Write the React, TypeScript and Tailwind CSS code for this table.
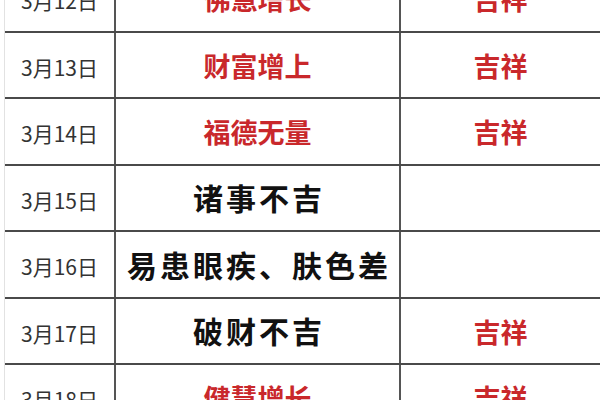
const rows = [
  { date: "3月12日", event: "佛慧增长", red: true, luck: "吉祥" },
  { date: "3月13日", event: "财富增上", red: true, luck: "吉祥" },
  { date: "3月14日", event: "福德无量", red: true, luck: "吉祥" },
  { date: "3月15日", event: "诸事不吉", red: false, luck: "" },
  { date: "3月16日", event: "易患眼疾、肤色差", red: false, luck: "" },
  { date: "3月17日", event: "破财不吉", red: false, luck: "吉祥" },
  { date: "3月18日", event: "健慧增长", red: true, luck: "吉祥" },
]

const font = { fontFamily: '"Noto Sans CJK SC", "Noto Sans", sans-serif' }

export default function App() {
  return (
    <div className="w-[600px] h-[400px] overflow-hidden bg-white" style={font}>
      <div className="mt-[-34px] ml-[4px] border-l border-[#e2e2e2]">
        {rows.map((row) => (
          <div
            key={row.date}
            className="grid grid-cols-[111px_285px_1fr] h-[66.5px] border-b-2 border-[#4a4a4a]"
          >
            <div className="flex items-center justify-center pt-[5px] border-r-2 border-[#555] text-[21px] text-[#333]">
              {row.date}
            </div>
            {row.red ? (
              <div className="flex items-center justify-center pt-[2px] border-r-2 border-[#555] text-[27px] font-semibold text-[#c9282b]">
                {row.event}
              </div>
            ) : (
              <div className="flex items-center justify-center pl-[3px] border-r-2 border-[#555] text-[30px] font-bold tracking-[3px] text-[#111]">
                {row.event}
              </div>
            )}
            <div className="flex items-center justify-center pt-[2px] text-[27px] font-semibold text-[#c9282b]">
              {row.luck}
            </div>
          </div>
        ))}
      </div>
    </div>
  )
}
